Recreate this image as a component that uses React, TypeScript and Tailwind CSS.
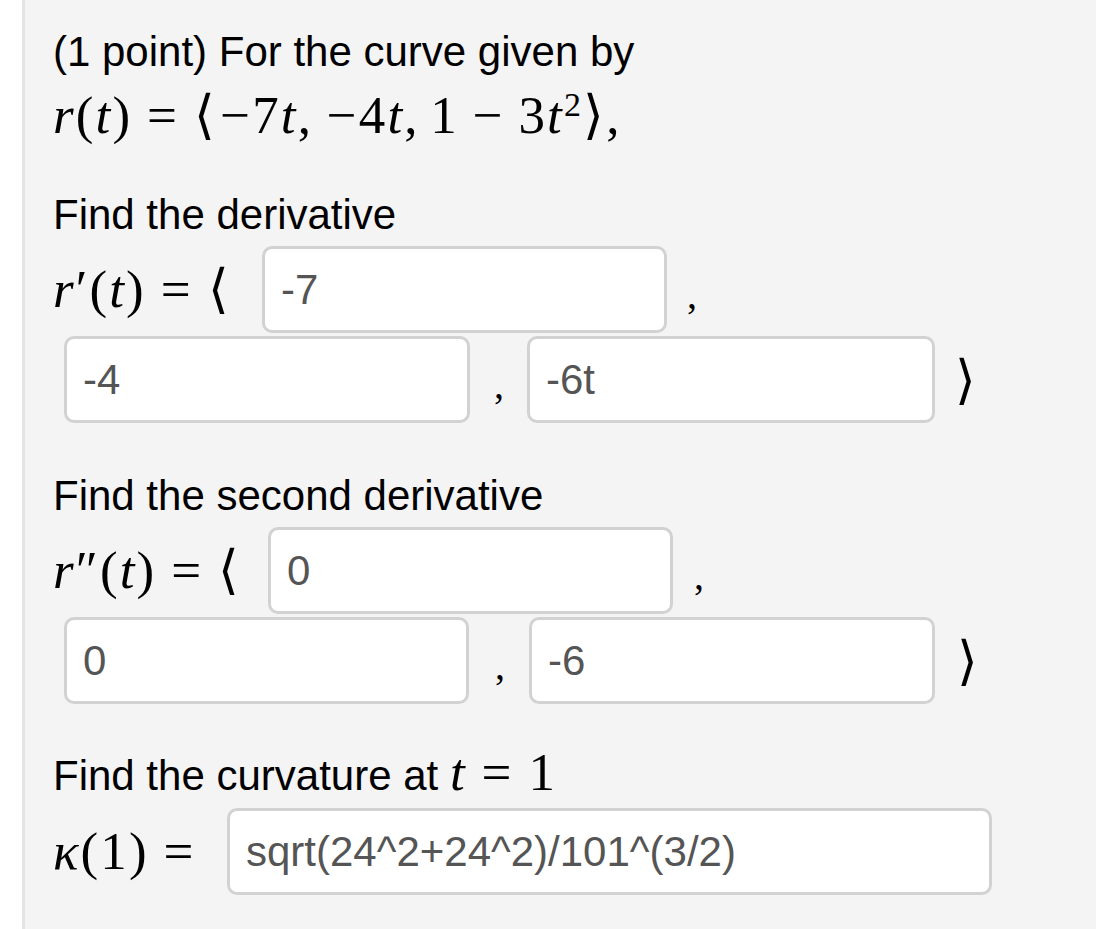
import React from "react"

const sans = { fontFamily: '"Liberation Sans", Arial, sans-serif' }

function Box({ value, className }: { value: string; className: string }) {
  return (
    <input
      readOnly
      value={value}
      className={`h-[87px] shrink-0 rounded-[10px] border-[3px] border-[#d2d2d2] bg-white pl-[16px] text-[42px] text-[#555555] outline-none font-['Liberation_Sans',Arial,sans-serif] ${className}`}
    />
  )
}

function Math({
  children,
  className = "",
  lh = "leading-[48px]",
}: {
  children: React.ReactNode
  className?: string
  lh?: string
}) {
  return (
    <span className={`whitespace-nowrap text-[53px] ${lh} tracking-[0.04em] text-black font-['Liberation_Serif','Times_New_Roman',serif] ${className}`}>
      {children}
    </span>
  )
}

const I = ({ children }: { children: React.ReactNode }) => <i>{children}</i>
const Eq = () => <span className="mx-[0.28em]">=</span>
const Neg = () => <span className="pl-[0.06em]">−</span>
const Minus = () => <span className="mx-[0.26em]">−</span>
const Sep = () => <span className="mr-[0.2em]">,</span>

function Comma({ className = "" }: { className?: string }) {
  return <span className={`self-end pb-[14px] text-[40px] leading-[48px] font-['Liberation_Serif',serif] ${className}`}>,</span>
}

function Close({ className = "" }: { className?: string }) {
  return <Math className={className}>⟩</Math>
}

export default function App() {
  return (
    <div className="min-h-[929px] bg-white pl-[22px]">
      <div className="min-h-[929px] border-l-[3px] border-[#e4e4e4] bg-[#f4f4f4] pl-[28px] pt-[28px] text-black" style={sans}>
        <div className="text-[42px] leading-[48px]">(1 point) For the curve given by</div>
        <div className="mt-[15px]">
          <Math>
            <I>r</I>(<I>t</I>)<Eq />⟨<Neg />7<I>t</I><Sep /><Neg />4<I>t</I><Sep />1<Minus />3<I>t</I>
            <sup className="text-[34px]">2</sup>⟩,
          </Math>
        </div>

        <div className="mt-[51px] text-[42px] leading-[48px]">Find the derivative</div>
        <div className="mt-[7px] flex items-center">
          <div className="w-[209px] shrink-0">
            <Math>
              <I>r</I>′(<I>t</I>)<Eq />⟨
            </Math>
          </div>
          <Box value="-7" className="w-[405px]" />
          <Comma className="ml-[20px]" />
        </div>
        <div className="mt-[3px] flex items-center pl-[11px]">
          <Box value="-4" className="w-[406px]" />
          <Comma className="ml-[24px] w-[33px]" />
          <Box value="-6t" className="w-[408px]" />
          <Close className="ml-[20px]" />
        </div>

        <div className="mt-[49px] text-[42px] leading-[48px]">Find the second derivative</div>
        <div className="mt-[7px] flex items-center">
          <div className="w-[215px] shrink-0">
            <Math>
              <I>r</I>″(<I>t</I>)<Eq />⟨
            </Math>
          </div>
          <Box value="0" className="w-[405px]" />
          <Comma className="ml-[21px]" />
        </div>
        <div className="mt-[3px] flex items-center pl-[11px]">
          <Box value="0" className="w-[405px]" />
          <Comma className="ml-[26px] w-[34px]" />
          <Box value="-6" className="w-[406px]" />
          <Close className="ml-[22px]" />
        </div>

        <div className="mt-[48px] text-[42px] leading-[48px]">
          Find the curvature at{" "}
          <Math lh="leading-[20px]">
            <I>t</I>
            <Eq />1
          </Math>
        </div>
        <div className="mt-[8px] flex items-center">
          <div className="w-[174px] shrink-0">
            <Math>
              <I>κ</I>(1)<Eq />
            </Math>
          </div>
          <Box value="sqrt(24^2+24^2)/101^(3/2)" className="w-[765px]" />
        </div>
      </div>
    </div>
  )
}
